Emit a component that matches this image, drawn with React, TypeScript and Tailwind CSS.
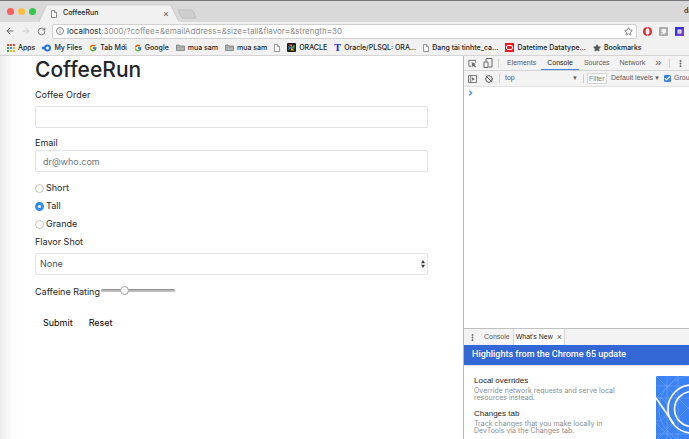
import { useState } from "react"
import type { ReactNode } from "react"
import {
  ArrowLeft,
  ArrowRight,
  Ban,
  Check,
  EllipsisVertical,
  RotateCw,
  Star,
} from "lucide-react"
import { FcGoogle } from "react-icons/fc"

interface Bookmark {
  label?: string
  icon: ReactNode
}

const FolderIcon = () => (
  <svg viewBox="0 0 18 14" className="h-[7px] w-[9px] shrink-0">
    <path d="M1 2h5l2 2h9v9H1z" fill="#b5b5b5" stroke="#777" strokeWidth="1.5" />
    <path d="M1 6h16" stroke="#888" strokeWidth="1" />
  </svg>
)

const PageIcon = () => (
  <svg viewBox="0 0 12 16" className="h-2 w-[6px] shrink-0" fill="#fff" stroke="#777" strokeWidth="1.5">
    <path d="M1 1h6l4 4v10H1z" />
    <path d="M7 1v4h4" />
  </svg>
)

const AppsIcon = () => (
  <svg viewBox="0 0 16 16" className="size-2 shrink-0">
    <path d="M0 0h4v4H0zM6 0h4v4H6zM12 0h4v4h-4z" fill="#e5483a" />
    <path d="M0 6h4v4H0z" fill="#33a653" />
    <path d="M6 6h4v4H6z" fill="#4285f4" />
    <path d="M12 6h4v4h-4zM12 12h4v4h-4zM6 12h4v4H6z" fill="#f7b528" />
    <path d="M0 12h4v4H0z" fill="#33a653" />
  </svg>
)

const FilesIcon = () => (
  <svg viewBox="0 0 18 16" className="h-2 w-[9px] shrink-0">
    <path d="M0 8h5" stroke="#2376d6" strokeWidth="5" />
    <circle cx="11" cy="8" r="5" fill="#fff" stroke="#2376d6" strokeWidth="4" />
  </svg>
)

const MosaicIcon = () => (
  <svg viewBox="0 0 18 18" className="size-[9px] shrink-0">
    <rect width="18" height="18" rx="2" fill="#1d1d1d" />
    <path d="M9 9 3 3h8z" fill="#e65a25" />
    <path d="m9 9 6-6v9z" fill="#4ea944" />
    <path d="m9 9 6 6H7z" fill="#e9b52b" />
    <path d="m9 9-6 6V6z" fill="#2f86c5" />
  </svg>
)

const OracleIcon = () => (
  <svg viewBox="0 0 18 18" className="size-[9px] shrink-0">
    <rect width="18" height="18" fill="#ea1b22" />
    <rect x="3" y="5" width="12" height="8" rx="3" fill="none" stroke="#fff" strokeWidth="2" />
  </svg>
)

const bookmarks: Bookmark[] = [
  { label: "Apps", icon: <AppsIcon /> },
  { label: "My Files", icon: <FilesIcon /> },
  { label: "Tab Mới", icon: <FcGoogle className="size-2 shrink-0" /> },
  { label: "Google", icon: <FcGoogle className="size-2 shrink-0" /> },
  { label: "mua sam", icon: <FolderIcon /> },
  { label: "mua sam", icon: <FolderIcon /> },
  { icon: <PageIcon /> },
  { label: "ORACLE", icon: <MosaicIcon /> },
  {
    label: "Oracle/PLSQL: ORA…",
    icon: (
      <span className="w-[7px] shrink-0 font-['Liberation_Serif',serif] text-[10px] font-bold text-[#1c1ccf]">
        T
      </span>
    ),
  },
  { label: "Đang tải tinhte_ca…", icon: <PageIcon /> },
  { label: "Datetime Datatype…", icon: <OracleIcon /> },
  {
    label: "Bookmarks",
    icon: <Star className="size-2 shrink-0 fill-[#555] text-[#555]" />,
  },
]

const TabStrip = () => (
  <div className="flex h-[22px] shrink-0 items-end border-t border-[#77777b] bg-[#d9d9d9]">
    <div className="flex gap-1 self-center pl-[7px]">
      <span className="size-[7px] rounded-full bg-[#fc5b57]" />
      <span className="size-[7px] rounded-full bg-[#fdbc40]" />
      <span className="size-[7px] rounded-full bg-[#33c748]" />
    </div>
    <div className="relative ml-[3px] flex h-[17px] w-[142px] items-center pr-3 pl-[12px]">
      <svg
        viewBox="0 0 142 17"
        preserveAspectRatio="none"
        className="absolute inset-0 size-full"
      >
        <path d="M0 17 7 1Q7.500 0 9 0H130q1.500 0 2 1l8 16" fill="#f1f1f1" stroke="#bcbcbc" strokeWidth=".6" />
      </svg>
      <svg viewBox="0 0 12 16" className="relative h-2 w-[6px]" fill="#fff" stroke="#666" strokeWidth="1.5">
        <path d="M1 1h6l4 4v10H1z" />
        <path d="M7 1v4h4" />
      </svg>
      <span className="relative ml-[6px] flex-1 text-[7px] font-medium text-[#222]">
        CoffeeRun
      </span>
      <button aria-label="Close tab" className="relative text-[9px] leading-none text-[#555]">
        ×
      </button>
    </div>
    <button aria-label="New tab" className="mb-[3px] -ml-1">
      <svg viewBox="0 0 20 10" className="h-[10px] w-5">
        <path d="M1 1h13q1 0 2 1l3 7H6q-1 0-1.500-1z" fill="#cecece" stroke="#b9b9b9" strokeWidth=".8" />
      </svg>
    </button>
    <span className="ml-auto w-[5px] self-center overflow-hidden text-[7px] font-semibold whitespace-nowrap text-[#333]">
      da
    </span>
  </div>
)

const Toolbar = () => (
  <div className="flex h-[18px] shrink-0 items-center gap-[6px] bg-[#f1f1f1] pl-[5px]">
    <button aria-label="Back">
      <ArrowLeft className="size-[10px] text-[#555]" strokeWidth={2} />
    </button>
    <button aria-label="Forward">
      <ArrowRight className="size-[10px] text-[#c4c4c4]" strokeWidth={2} />
    </button>
    <button aria-label="Reload">
      <RotateCw className="size-[9px] text-[#555]" strokeWidth={2} />
    </button>
    <div className="flex h-[15px] flex-1 items-center rounded-xs border border-[#d0d0d0] bg-white px-[3px]">
      <svg viewBox="0 0 16 16" className="size-2 shrink-0" fill="none" stroke="#555" strokeWidth="1.500">
        <circle cx="8" cy="8" r="7" />
        <path d="M8 7v5M8 4v1.500" />
      </svg>
      <a href="#url" className="ml-[3px] flex-1 text-[8px] leading-3 text-[#8a8a8a]">
        <span className="text-[#222]">localhost</span>
        :3000/?coffee=&amp;emailAddress=&amp;size=tall&amp;flavor=&amp;strength=30
      </a>
      <button aria-label="Bookmark this page">
        <Star className="size-[9px] text-[#555]" strokeWidth={2} />
      </button>
    </div>
    <div className="flex items-center gap-[7px] pr-[5px]">
      <svg viewBox="0 0 18 18" className="size-[9px]">
        <path d="M9 0a9 9 0 1 0 0 18A9 9 0 0 0 9 0" fill="#e8242b" />
        <ellipse cx="9" cy="9" rx="4" ry="6" fill="#fff" />
        <path d="m8 0 2 3-2 2M10 18l-2-3 2-2" fill="none" stroke="#f1f1f1" strokeWidth="1.500" />
      </svg>
      <svg viewBox="0 0 18 18" className="size-[9px]">
        <rect width="18" height="18" rx="2" fill="#aaa" />
        <path d="M5 4h9v7l-3 3H8v-3H5z" fill="#f5f5f5" />
        <path d="M4 12h3v3H4z" fill="#ddd" />
      </svg>
      <svg viewBox="0 0 18 18" className="size-[9px]">
        <path d="M0 0h18v18H0z" fill="#3a2fe0" />
        <path d="M0 18 18 0v18z" fill="#6a3fcb" />
        <rect x="5" y="5" width="8" height="8" rx="1" fill="#fff" />
        <path d="M7 8h4M7 10.500h4" stroke="#4437d8" strokeWidth="1" />
      </svg>
    </div>
  </div>
)

const BookmarksBar = () => (
  <nav className="flex h-4 shrink-0 items-center gap-[7px] overflow-hidden border-b border-[#d5d5d5] bg-[#f1f1f1] pl-[7px]">
    {bookmarks.map((bookmark, i) => (
      <a
        key={i}
        href="#bookmark"
        aria-label={bookmark.label ?? "Untitled"}
        className="flex shrink-0 items-center gap-[3px] text-[7px] leading-3 font-medium whitespace-nowrap text-[#222]"
      >
        {bookmark.icon}
        {bookmark.label}
      </a>
    ))}
  </nav>
)

const CoffeeForm = () => {
  const [size, setSize] = useState("tall")
  const [strength, setStrength] = useState(30)

  return (
    <form
      className="flex flex-col px-[35px] text-[9px] leading-[14px] text-[#212529]"
      onSubmit={(e) => e.preventDefault()}
    >
      <h1 className="text-[21px] leading-7 font-medium">CoffeeRun</h1>
      <label htmlFor="coffee" className="mt-1">
        Coffee Order
      </label>
      <input
        id="coffee"
        className="mt-1 h-[22px] w-full rounded-xs border border-[#dfe3e7] px-[7px] outline-none"
      />
      <label htmlFor="email" className="mt-2">
        Email
      </label>
      <input
        id="email"
        type="email"
        placeholder="dr@who.com"
        className="h-[22px] w-full rounded-xs border border-[#dfe3e7] px-[7px] outline-none placeholder:text-[#6c757d]"
      />
      <div className="mt-[9px] flex flex-col gap-1">
        {["Short", "Tall", "Grande"].map((name) => (
          <label key={name} className="flex items-center gap-[2px]">
            <input
              type="radio"
              name="size"
              className="size-[9px] appearance-none rounded-full border border-[#c4c4c4] bg-white checked:border-[3px] checked:border-[#2f8bfa]"
              checked={size === name.toLowerCase()}
              onChange={() => setSize(name.toLowerCase())}
            />
            {name}
          </label>
        ))}
      </div>
      <label htmlFor="flavor" className="mt-1">
        Flavor Shot
      </label>
      <div className="relative mt-1">
        <select
          id="flavor"
          className="h-[22px] w-full appearance-none rounded-xs border border-[#dfe3e7] bg-white px-1 text-[#495057] outline-none"
        >
          <option>None</option>
          <option>Caramel</option>
          <option>Almond</option>
          <option>Mocha</option>
        </select>
        <svg viewBox="0 0 4 8" className="pointer-events-none absolute top-[7px] right-[3px] h-2 w-1" fill="#343a40">
          <path d="M2 0 4 3.300H0zM2 8 0 4.700h4z" />
        </svg>
      </div>
      <div className="mt-[10px] flex items-center gap-px">
        <label htmlFor="strength">Caffeine Rating</label>
        <input
          id="strength"
          type="range"
          value={strength}
          onChange={(e) => setStrength(Number(e.target.value))}
          className="mb-[3px] h-[9px] w-[74px] appearance-none bg-transparent [&::-webkit-slider-runnable-track]:h-[3px] [&::-webkit-slider-runnable-track]:rounded-full [&::-webkit-slider-runnable-track]:border-t [&::-webkit-slider-runnable-track]:border-[#8c8c8c] [&::-webkit-slider-runnable-track]:bg-[#bdbdbd] [&::-webkit-slider-thumb]:-mt-1 [&::-webkit-slider-thumb]:size-[9px] [&::-webkit-slider-thumb]:appearance-none [&::-webkit-slider-thumb]:rounded-full [&::-webkit-slider-thumb]:border [&::-webkit-slider-thumb]:border-[#a5a5a5] [&::-webkit-slider-thumb]:bg-[#f7f7f7]"
        />
      </div>
      <div className="mt-[13px] flex text-black">
        <button type="submit" className="h-[22px] px-2">
          Submit
        </button>
        <button type="reset" className="h-[22px] px-2">
          Reset
        </button>
      </div>
    </form>
  )
}

const DevTools = () => (
  <aside className="flex w-[226px] shrink-0 flex-col overflow-hidden border-l border-[#b5b5b5] bg-white font-['Liberation_Sans',sans-serif] text-[7px] text-[#5a5a5a]">
    <div className="flex h-[15px] shrink-0 items-center border-b border-[#d5d5d5] bg-[#f3f3f3] pl-1">
      <button aria-label="Inspect">
        <svg viewBox="0 0 20 20" className="size-[9px]" fill="none" stroke="#666" strokeWidth="2">
          <path d="M8 16H2V3h15v5" />
          <path d="m8 7 10 4-4 2 4 4-2 2-4-4-2 4z" fill="#666" stroke="none" />
        </svg>
      </button>
      <button aria-label="Toggle device toolbar" className="ml-[6px]">
        <svg viewBox="0 0 20 20" className="size-[10px]" fill="none" stroke="#666" strokeWidth="2">
          <path d="M6 7V1h12v17h-7" />
          <path d="M2 8h8v11H2z" />
        </svg>
      </button>
      <span className="ml-[5px] h-[9px] w-px bg-[#ccc]" />
      <div className="ml-[3px] flex h-full">
        {["Elements", "Console", "Sources", "Network"].map((tab) => (
          <button
            key={tab}
            className={
              tab === "Console"
                ? "border-y border-t-transparent border-b-[#3b82e8] px-[6px] text-[#222]"
                : "px-[5px]"
            }
          >
            {tab}
          </button>
        ))}
      </div>
      <button className="ml-[5px] pb-px text-[11px] leading-none">»</button>
      <span className="ml-2 h-[9px] w-px bg-[#ccc]" />
      <button aria-label="More options" className="ml-[6px]">
        <EllipsisVertical className="size-[9px]" strokeWidth={3} />
      </button>
    </div>
    <div className="flex h-4 shrink-0 items-center overflow-hidden border-b border-[#e0e0e0] bg-[#f3f3f3] pl-1 whitespace-nowrap *:shrink-0">
      <button aria-label="Show console sidebar">
        <svg viewBox="0 0 20 18" className="h-2 w-[9px]" fill="none" stroke="#666" strokeWidth="2">
          <path d="M1 1h18v16H1zM6 1v16" />
          <path d="m9 5 6 4-6 4z" fill="#666" stroke="none" />
        </svg>
      </button>
      <button aria-label="Clear console" className="ml-2">
        <Ban className="size-2" strokeWidth={3} />
      </button>
      <span className="ml-[6px] h-[9px] w-px bg-[#ccc]" />
      <button className="ml-[5px] flex w-[73px] items-center justify-between">
        top
        <span className="text-[6px]">▼</span>
      </button>
      <span className="ml-[5px] h-[9px] w-px bg-[#ccc]" />
      <input
        aria-label="Filter"
        placeholder="Filter"
        className="ml-[3px] h-[11px] w-[20px] border border-[#d5d5d5] bg-white px-px outline-none placeholder:text-[#777]"
      />
      <button className="ml-1 flex items-center gap-px">
        Default levels
        <span className="text-[6px]">▼</span>
      </button>
      <label className="ml-1 flex items-center gap-[3px]">
        <span className="relative flex size-[7px]">
          <input
            type="checkbox"
            defaultChecked
            className="size-[7px] appearance-none rounded-[1px] border border-[#3b82e8] bg-white checked:bg-[#3b82e8]"
          />
          <Check className="pointer-events-none absolute inset-0 size-[7px] text-white" strokeWidth={4} />
        </span>
        Group
      </label>
    </div>
    <div className="flex-1 pt-[2px] pl-1">
      <svg viewBox="0 0 8 10" className="mt-px h-[6px] w-[5px]" fill="none" stroke="#3b82f6" strokeWidth="2">
        <path d="m2 1 4 4-4 4" />
      </svg>
    </div>
    <section className="h-[111px] shrink-0 border-t border-[#c0c0c0]">
      <div className="flex h-4 items-center bg-[#f3f3f3] pl-1">
        <button aria-label="More tools">
          <EllipsisVertical className="size-[9px]" strokeWidth={3} />
        </button>
        <button className="ml-1 px-[3px]">Console</button>
        <div className="flex h-full items-center gap-1 border-x border-[#d5d5d5] bg-white px-[2px] text-[#222]">
          <button>What&apos;s New</button>
          <button aria-label="Close What's New" className="text-[9px] leading-none text-[#555]">
            ×
          </button>
        </div>
      </div>
      <h2 className="flex h-5 items-center bg-[#3367d6] pl-2 font-['Roboto',sans-serif] text-[9px] font-medium text-white shadow-sm">
        Highlights from the Chrome 65 update
      </h2>
      <div className="flex items-start pt-[11px] pl-[10px]">
        <div className="min-w-0 flex-1 text-[8px] leading-[7px] text-[#8d8d8d]">
          <h3 className="leading-[9px] text-[#222]">Local overrides</h3>
          <p className="max-w-[148px] pt-[2px] font-['Inter',sans-serif] text-[7px]">
            Override network requests and serve local resources instead.
          </p>
          <h3 className="pt-2 leading-[9px] text-[#222]">Changes tab</h3>
          <p className="max-w-[148px] pt-[2px] font-['Inter',sans-serif] text-[7px]">
            Track changes that you make locally in DevTools via the Changes tab.
          </p>
        </div>
        <svg viewBox="0 0 33 64" className="h-16 w-[33px] shrink-0">
          <rect width="40" height="64" rx="1" fill="#3b82f3" />
          <g fill="none" stroke="#8ab5fa" strokeWidth=".4">
            <path d="M11 0v64M22 0v64M0 10h33M0 22h33M0 58h33M0 0l33 33M22 0 0 22M0 64l33-33M0 47l17 17" />
            <circle cx="36" cy="33" r="33" />
            <circle cx="0" cy="33" r="12" />
          </g>
          <g fill="none" stroke="#fff" strokeWidth="1.600">
            <circle cx="36" cy="33" r="24" />
            <circle cx="36" cy="33" r="17.500" />
            <path d="m0 22 18 26" />
          </g>
        </svg>
      </div>
    </section>
  </aside>
)

const App = () => (
  <div className="flex h-screen flex-col overflow-hidden bg-white font-['Inter',sans-serif]">
    <TabStrip />
    <Toolbar />
    <BookmarksBar />
    <div className="flex min-h-0 flex-1">
      <main className="min-w-0 flex-1 bg-linear-to-r from-[#ececec] via-[#fcfcfc] via-[12px] to-white to-[24px]">
        <CoffeeForm />
      </main>
      <DevTools />
    </div>
  </div>
)

export default App
